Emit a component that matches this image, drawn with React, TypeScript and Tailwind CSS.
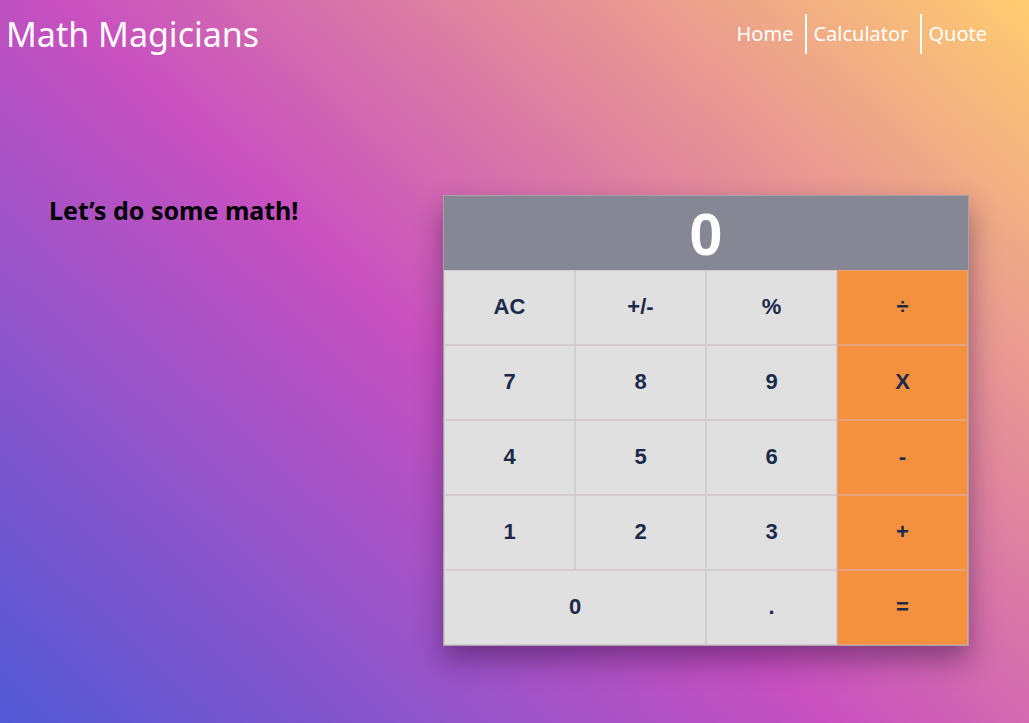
import React from 'react';

const KEYS: { label: string; orange?: boolean; wide?: boolean }[] = [
    { label: 'AC' }, { label: '+/-' }, { label: '%' }, { label: '÷', orange: true },
    { label: '7' }, { label: '8' }, { label: '9' }, { label: 'X', orange: true },
    { label: '4' }, { label: '5' }, { label: '6' }, { label: '-', orange: true },
    { label: '1' }, { label: '2' }, { label: '3' }, { label: '+', orange: true },
    { label: '0', wide: true }, { label: '.' }, { label: '=', orange: true },
];

const NAV = ['Home', 'Calculator', 'Quote'];

const Calculator: React.FC = () => {
    return (
        <div className="w-[526px] border border-[#aaa1a8] shadow-[0_14px_26px_rgba(40,10,60,0.45)]">
            <div className="h-[74px] bg-[#858795] flex items-center justify-center pt-[4px] text-white font-bold text-[60px] leading-none font-['Liberation_Sans',Arial,sans-serif]">
                0
            </div>
            <div className="grid grid-cols-4">
                {KEYS.map((key) => (
                    <button
                        key={key.label}
                        type="button"
                        className={`h-[75px] border pb-[2px] font-['Liberation_Sans',Arial,sans-serif] font-bold text-[22px] text-[#1b2a4a] ${
                            key.orange ? 'bg-[#f4913e] border-[#e6a27e]' : 'bg-[#e0e0e0] border-[#d3ccd1]'
                        } ${key.wide ? 'col-span-2' : ''}`}
                    >
                        {key.label}
                    </button>
                ))}
            </div>
        </div>
    );
};

const App: React.FC = () => {
    return (
        <div className="min-h-[723px] w-full bg-[linear-gradient(43deg,#5159d5_0%,#C850C0_46%,#FFCC70_100%)] font-['Noto_Sans','Open_Sans',sans-serif]">
            <header className="h-[70px] flex items-center justify-between pl-[6px] pr-[42px]">
                <h1 className="text-[34px] text-white leading-none -mt-[2px]">Math Magicians</h1>
                <nav>
                    <ul className="flex items-center text-white text-[20px] -mt-[3px]">
                        {NAV.map((item, index) => (
                            <li
                                key={item}
                                className={index === 0 ? '' : 'ml-3 pl-[6px] border-l-2 border-white h-[40px] flex items-center'}
                            >
                                {item}
                            </li>
                        ))}
                    </ul>
                </nav>
            </header>
            <main className="flex justify-between items-start pl-[49px] pr-[60px] pt-[125px] pb-[78px]">
                <h2 className="text-[25px] leading-tight font-bold text-black">Let’s do some math!</h2>
                <Calculator />
            </main>
        </div>
    );
};

export default App;
